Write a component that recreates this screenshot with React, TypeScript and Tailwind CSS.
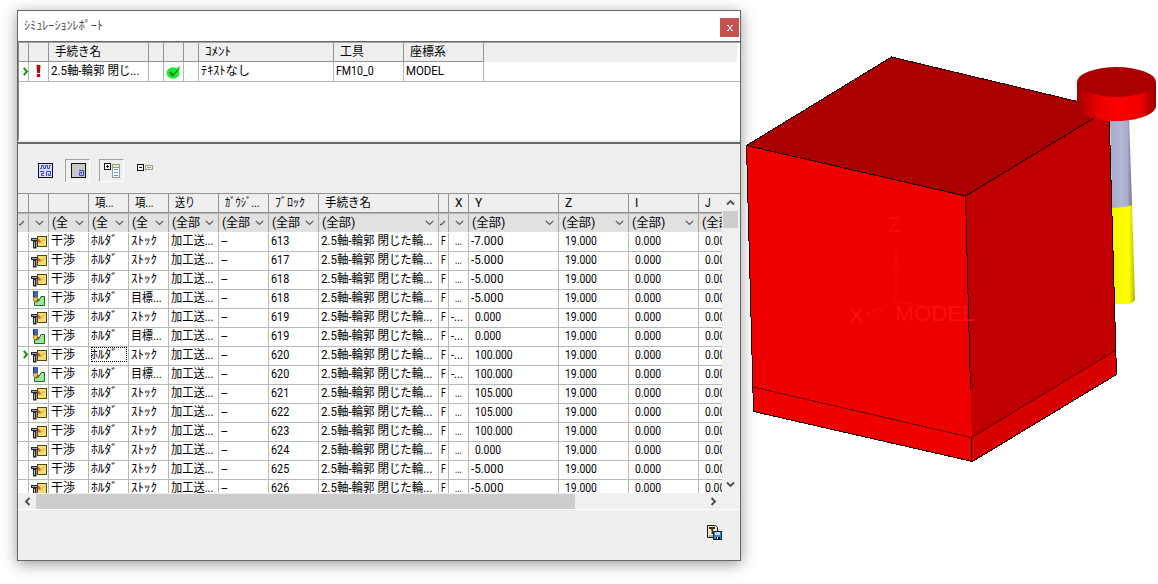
import { useLayoutEffect, useRef } from "react";
import type { ReactNode } from "react";

/** One line of text, condensed horizontally to the given width. */
function Fit({ w, children, className = "" }: { w: number; children: string; className?: string }) {
  const ref = useRef<HTMLSpanElement>(null);
  useLayoutEffect(() => {
    const el = ref.current;
    if (el && el.offsetWidth) el.style.transform = `scaleX(${w / el.offsetWidth})`;
  }, [w, children]);
  return (
    <span ref={ref} className={`inline-block shrink-0 origin-left whitespace-pre ${className}`}>
      {children}
    </span>
  );
}

function Cell({ size, className = "", children }: { size: string; className?: string; children?: ReactNode }) {
  return (
    <div className={`flex h-full shrink-0 items-center overflow-hidden border-r ${size} ${className}`}>{children}</div>
  );
}

function Chevron() {
  return (
    <svg className="shrink-0" width="9" height="6" viewBox="0 0 9 6">
      <path d="M.8 .8 4.5 4.5 8.2 .8" fill="none" stroke="#555" strokeWidth="1.2" />
    </svg>
  );
}

function Marker() {
  return (
    <svg className="ml-[5px] shrink-0" width="6" height="9" viewBox="0 0 6 9">
      <path d="M.8 .8 4 4.5 .8 8.2" fill="none" stroke="#0a960a" strokeWidth="2" />
    </svg>
  );
}

function StockIcon() {
  return (
    <svg className="ml-[2px] shrink-0" width="16" height="14" viewBox="0 0 16 14">
      <path d="M0 3h7v3H5.500v7.500H2V6H0z" fill="#26262c" />
      <path d="M1 4h5v1H1z" fill="#a2a4d4" />
      <path d="M3 7h1v5H3z" fill="#b8b8c4" />
      <rect x="6.500" y="1.500" width="9" height="10" fill="#f0de70" stroke="#52440a" />
      <path d="M9 8.500 13.500 4" fill="none" stroke="#dd9a3a" />
      <path d="M7 4h1l2 2-1 1.500H7z" fill="#d8642c" />
    </svg>
  );
}

function TargetIcon() {
  return (
    <svg className="ml-[4px] shrink-0" width="13" height="16" viewBox="0 0 13 16">
      <path d="M1.500 10.500v4h10v-9H8l-2 4-2 1.500z" fill="#9be79b" stroke="#1c6a24" />
      <rect x="0" y="0" width="5" height="6" fill="#3c64b4" />
      <path d="M0 0h1v6H0z" fill="#1c2c50" />
      <path d="M.5 6.300h4v2L2.500 11 .5 9z" fill="#f4cf3b" stroke="#6b5300" strokeWidth=".7" />
      <path d="M4 8h2v2H4z" fill="#c63b17" />
    </svg>
  );
}

const COLS = [
  { size: "w-[11px]", head: "", hw: 0, filter: "", fw: 0 },
  { size: "w-[20px]", head: "", hw: 0, filter: "", fw: 0 },
  { size: "w-[40px]", head: "", hw: 0, filter: "(全", fw: 16 },
  { size: "w-[40px]", head: "項...", hw: 19, filter: "(全", fw: 16 },
  { size: "w-[40px]", head: "項...", hw: 19, filter: "(全", fw: 16 },
  { size: "w-[50px]", head: "送り", hw: 20, filter: "(全部", fw: 28 },
  { size: "w-[50px]", head: "ｶﾞｳｼﾞ...", hw: 35, filter: "(全部", fw: 28 },
  { size: "w-[50px]", head: "ﾌﾞﾛｯｸ", hw: 30, filter: "(全部", fw: 28 },
  { size: "w-[120px]", head: "手続き名", hw: 46, filter: "(全部)", fw: 33 },
  { size: "w-[10px]", head: "", hw: 0, filter: "", fw: 0 },
  { size: "w-[20px]", head: "X", hw: 8, filter: "", fw: 0 },
  { size: "w-[90px]", head: "Y", hw: 7, filter: "(全部)", fw: 33 },
  { size: "w-[70px]", head: "Z", hw: 7, filter: "(全部)", fw: 33 },
  { size: "w-[70px]", head: "I", hw: 3, filter: "(全部)", fw: 33 },
  { size: "w-[70px]", head: "J", hw: 6, filter: "(全部)", fw: 33 },
];

type Row = { block: string; target?: boolean; x: string; y: string; active?: boolean };

const ROWS: Row[] = [
  { block: "613", x: "...", y: "-7.000" },
  { block: "617", x: "...", y: "-5.000" },
  { block: "618", x: "...", y: "-5.000" },
  { block: "618", target: true, x: "...", y: "-5.000" },
  { block: "619", x: "-...", y: "0.000" },
  { block: "619", target: true, x: "-...", y: "0.000" },
  { block: "620", x: "-...", y: "100.000", active: true },
  { block: "620", target: true, x: "-...", y: "100.000" },
  { block: "621", x: "...", y: "105.000" },
  { block: "622", x: "...", y: "105.000" },
  { block: "623", x: "...", y: "100.000" },
  { block: "624", x: "...", y: "0.000" },
  { block: "625", x: "...", y: "-5.000" },
  { block: "626", x: "...", y: "-5.000" },
];

function DataRow({ row }: { row: Row }) {
  const line = "border-[#b4bab4] pb-[3px]";
  const neg = row.y.startsWith("-");
  return (
    <div className="flex h-[19px] shrink-0 border-b border-[#b4bab4] bg-white">
      <Cell size="w-[11px]" className={line}>{row.active && <Marker />}</Cell>
      <Cell size="w-[20px]" className="border-[#b4bab4] pb-px">{row.target ? <TargetIcon /> : <StockIcon />}</Cell>
      <Cell size="w-[40px]" className={`pl-[2px] ${line}`}><Fit w={24}>干渉</Fit></Cell>
      <Cell size="w-[40px]" className={`pl-[2px] ${line}`}>
        <div className={`flex h-[15px] w-[36px] items-center border border-dotted ${row.active ? "border-black" : "border-transparent"}`}>
          <Fit w={27} className="-ml-px">ﾎﾙﾀﾞ</Fit>
        </div>
      </Cell>
      <Cell size="w-[40px]" className={`pl-[2px] ${line}`}>
        {row.target ? <Fit w={31}>目標...</Fit> : <Fit w={26}>ｽﾄｯｸ</Fit>}
      </Cell>
      <Cell size="w-[50px]" className={`pl-[2px] ${line}`}><Fit w={43}>加工送...</Fit></Cell>
      <Cell size="w-[50px]" className={`pl-[2px] ${line}`}><Fit w={6}>-</Fit></Cell>
      <Cell size="w-[50px]" className={`pl-[2px] ${line}`}><Fit w={18}>{row.block}</Fit></Cell>
      <Cell size="w-[120px]" className={`pl-[2px] ${line}`}><Fit w={111}>2.5軸-輪郭 閉じた輪...</Fit></Cell>
      <Cell size="w-[10px]" className={`pl-[2px] ${line}`}><Fit w={5}>F</Fit></Cell>
      <Cell size="w-[20px]" className={`${line} ${row.x === "..." ? "pl-[6px]" : "pl-[2px]"}`}>
        <Fit w={row.x === "..." ? 7 : 12}>{row.x}</Fit>
      </Cell>
      <Cell size="w-[90px]" className={`${line} ${neg ? "pl-[2px]" : "pl-[6px]"}`}>
        <Fit w={neg ? 32 : row.y.length > 5 ? 38 : 26}>{row.y}</Fit>
      </Cell>
      <Cell size="w-[70px]" className={`pl-[6px] ${line}`}><Fit w={32}>19.000</Fit></Cell>
      <Cell size="w-[70px]" className={`pl-[6px] ${line}`}><Fit w={26}>0.000</Fit></Cell>
      <Cell size="w-[70px]" className={`pl-[6px] ${line}`}><Fit w={26}>0.000</Fit></Cell>
    </div>
  );
}

function TopTable() {
  const h = "border-[#929292] pl-[6px]";
  const c = "border-[#b4b4b4] pb-px";
  return (
    <div className="flex h-[97px] flex-col border-l border-[#8a8a8a] bg-white">
      <div className="mr-[3px] flex h-[19px] border-b border-[#929292] bg-[#efefef] [border-image:linear-gradient(to_right,#929292_465px,#efefef_465px)_1]">
        <Cell size="w-[10px]" className={h} />
        <Cell size="w-[20px]" className={h} />
        <Cell size="w-[100px]" className={h}><Fit w={46}>手続き名</Fit></Cell>
        <Cell size="w-[15px]" className={h} />
        <Cell size="w-[20px]" className={h} />
        <Cell size="w-[15px]" className={h} />
        <Cell size="w-[135px]" className={h}><Fit w={26}>ｺﾒﾝﾄ</Fit></Cell>
        <Cell size="w-[70px]" className={h}><Fit w={24}>工具</Fit></Cell>
        <Cell size="w-[80px]" className={h}><Fit w={36}>座標系</Fit></Cell>
      </div>
      <div className="flex h-[20px] border-b border-[#b4b4b4]">
        <Cell size="w-[10px]" className={c}><span className="-ml-px flex"><Marker /></span></Cell>
        <Cell size="w-[20px]" className={`justify-center ${c}`}>
          <svg width="5" height="12" viewBox="0 0 5 12"><path d="M.5 0h4L4 8H1zM.8 9h3.400v3H.8z" fill="#b80c0c" /></svg>
        </Cell>
        <Cell size="w-[100px]" className={`pl-[2px] ${c}`}><Fit w={88}>2.5軸-輪郭 閉じ...</Fit></Cell>
        <Cell size="w-[15px]" className={c} />
        <Cell size="w-[20px]" className={`justify-center ${c}`}>
          <svg className="mt-[2px]" width="15" height="13" viewBox="0 0 15 13">
            <ellipse cx="7" cy="7" rx="6.500" ry="5.800" fill="#1ee632" />
            <path d="M4 6 6.500 9 13 2" fill="none" stroke="#0b8a18" strokeWidth="2.200" />
            <path d="M6.500 7.500 13.800 .6" fill="none" stroke="#20ee35" strokeWidth="1.400" />
          </svg>
        </Cell>
        <Cell size="w-[15px]" className={c} />
        <Cell size="w-[135px]" className={`pl-[2px] ${c}`}><Fit w={49}>ﾃｷｽﾄなし</Fit></Cell>
        <Cell size="w-[70px]" className={`pl-[2px] ${c}`}><Fit w={38}>FM10_0</Fit></Cell>
        <Cell size="w-[80px]" className={`pl-[2px] ${c}`}><Fit w={38}>MODEL</Fit></Cell>
      </div>
    </div>
  );
}

function Toolbar() {
  const pressed = "flex h-[23px] w-[25px] items-center justify-center border border-t-[#a0a0a0] border-l-[#a0a0a0] border-r-white border-b-white";
  return (
    <div className="flex h-[49px] items-start pt-[15px] pl-[20px]">
      <svg className="mt-[4px]" width="15" height="15" viewBox="0 0 15 15">
        <rect x=".5" y=".5" width="14" height="14" fill="#dedeff" stroke="#111" />
        <path d="M2 5.500h1.500v-3h2v3h2v-3h2v3h2v-3H13M2 8.500h3.500v2h-2v2H6M8.500 13V8.500h4v4h-2v-2" fill="none" stroke="#3c3cf0" />
      </svg>
      <div className={`ml-[12px] ${pressed}`}>
        <svg className="ml-px" width="15" height="15" viewBox="0 0 15 15">
          <rect x=".5" y=".5" width="14" height="14" fill="#c8c8c8" stroke="#111" />
          <path d="M8 7.500h4.500v5h-4v-3h2v1.500" fill="none" stroke="#3c3cf0" />
        </svg>
      </div>
      <div className={`ml-[9px] ${pressed}`}>
        <svg className="ml-[2px]" width="17" height="15" viewBox="0 0 17 15">
          <rect x=".5" y=".5" width="6" height="6" fill="#fff" stroke="#111" />
          <path d="M2 3.500h3M3.500 2v3" stroke="#111" />
          <rect x="8.500" y="1.500" width="7" height="13" fill="#fff" stroke="#8a9c9c" />
          <path d="M8.500 1.500h7v3h-7z" fill="#e5e5cc" stroke="#9c9c72" />
          <path d="M10 6.500h4M10 9.500h4M10 12.500h4" stroke="#5a9ac8" />
        </svg>
      </div>
      <svg className="ml-[13px] mt-[5px]" width="17" height="8" viewBox="0 0 17 8">
        <rect x=".5" y=".5" width="6" height="6" fill="#fff" stroke="#111" />
        <path d="M2 3.500h3" stroke="#111" />
        <rect x="8.500" y="1.500" width="7" height="4" fill="#f0f0df" stroke="#999b88" />
        <path d="M10 3.500h4" stroke="#999b88" />
      </svg>
    </div>
  );
}

function Arrow({ d }: { d: string }) {
  return (
    <svg width="9" height="9" viewBox="0 0 9 9">
      <path d={d} fill="none" stroke="#505050" strokeWidth="1.900" />
    </svg>
  );
}

function ResultTable() {
  return (
    <div className="flex h-[300px] border-t border-[#929292]">
      <div className="flex w-[704px] flex-col overflow-hidden">
        <div className="flex h-[19px] shrink-0 border-b border-[#929292] bg-[#efefef]">
          {COLS.map((c, i) => (
            <Cell key={i} size={c.size} className="border-[#929292] pl-[6px]">
              {c.head && <Fit w={c.hw}>{c.head}</Fit>}
            </Cell>
          ))}
        </div>
        <div className="flex h-[19px] shrink-0 border-t border-[#b0b0b0] bg-[#e1e1e1]">
          {COLS.map((c, i) => (
            <Cell key={i} size={c.size} className="justify-between border-[#a4a4a4] pl-[3px] pr-[4px]">
              {c.filter ? <Fit w={c.fw}>{c.filter}</Fit> : null}
              {c.size === "w-[10px]" || c.size === "w-[11px]" ? (
                <svg className="-ml-[2px] shrink-0" width="6" height="7" viewBox="0 0 6 7"><path d="m0 4 1 1L5 1" fill="none" stroke="#555" strokeWidth="1.200" /></svg>
              ) : (
                <span className={c.filter ? "-ml-4 flex" : "ml-[3px] flex"}><Chevron /></span>
              )}
            </Cell>
          ))}
        </div>
        <div className="flex shrink-0 flex-col bg-white pt-px">
          {ROWS.map((r, i) => <DataRow key={i} row={r} />)}
        </div>
      </div>
      <div className="ml-px flex w-[15px] flex-col items-center justify-between bg-[#f0f0f0] pt-[4px] pb-[4px]">
        <Arrow d="M1 6.500 4.500 3 8 6.500" />
        <div className="mt-[4px] mb-auto h-[17px] w-full bg-[#cdcdcd]" />
        <Arrow d="M1 2.500 4.500 6 8 2.500" />
      </div>
    </div>
  );
}

function ReportWindow() {
  return (
    <div className="mt-[10px] ml-[17px] flex h-[551px] w-[724px] shrink-0 flex-col border border-[#666] bg-[#efefef] shadow-[0_3px_14px_rgba(0,0,0,0.4)]">
      <div className="flex h-[31px] shrink-0 items-start justify-between border-b border-[#666] bg-white">
        <div className="mt-[6px] ml-[6px] flex h-[18px] items-center text-[#444]">
          <Fit w={79}>ｼﾐｭﾚｰｼｮﾝﾚﾎﾟｰﾄ</Fit>
        </div>
        <div className="mt-[7px] mr-px flex h-[19px] w-[19px] items-center justify-center bg-[#c75050]">
          <svg width="6" height="6" viewBox="0 0 6 6"><path d="m1 .5 4 5M5 .5l-4 5M0 .5h2M4 .5h2M0 5.500h2M4 5.500h2" stroke="#fff" /></svg>
        </div>
      </div>
      <div className="h-px shrink-0 bg-[#a4a4a4]" />
      <TopTable />
      <div className="h-[2px] shrink-0 bg-[#efefef]" />
      <div className="h-[2px] shrink-0 bg-[#696969]" />
      <Toolbar />
      <ResultTable />
      <div className="flex h-[16px] shrink-0 items-center bg-[#f0f0f0]">
        <div className="flex w-[18px] justify-center"><Arrow d="M6.500 1 3 4.500 6.500 8" /></div>
        <div className="h-[15px] w-[539px] bg-[#cdcdcd]" />
        <div className="ml-auto mr-[22px] flex"><Arrow d="M2.500 1 6 4.500 2.500 8" /></div>
      </div>
      <div className="h-px shrink-0 bg-white" />
      <div className="flex flex-1 items-start justify-end pt-[15px] pr-[18px]">
        <svg width="15" height="15" viewBox="0 0 15 15">
          <path d="M.5 .5h8l2 2v10H.5z" fill="#f2ecc8" stroke="#111" />
          <path d="M2 2h6v2H6v5H4V4H2z" fill="#3d2a14" />
          <path d="M4 5h1v4H4z" fill="#e38b2c" />
          <path d="M2 10h4v2H2z" fill="#8bc58b" />
          <rect x="6.500" y="6.500" width="8" height="8" fill="#3f86d2" stroke="#10203a" />
          <path d="M8 7h5v3H8z" fill="#bcdcff" />
          <path d="M9 12h4v2H9z" fill="#111" />
          <path d="M10 12h1v2h-1z" fill="#fff" />
        </svg>
      </div>
    </div>
  );
}

function Model() {
  return (
    <svg className="h-[584px] w-[417px] shrink-0" viewBox="741 0 417 584">
      <defs>
        <linearGradient id="disc">
          <stop offset="0" stopColor="#a00000" />
          <stop offset=".25" stopColor="#e80000" />
          <stop offset=".5" stopColor="#ff0000" />
          <stop offset=".8" stopColor="#f00000" />
          <stop offset="1" stopColor="#980000" />
        </linearGradient>
        <linearGradient id="shank">
          <stop offset="0" stopColor="#a4a8c6" />
          <stop offset=".5" stopColor="#b4b8d8" />
          <stop offset=".8" stopColor="#a8acca" />
          <stop offset="1" stopColor="#6e7084" />
        </linearGradient>
        <linearGradient id="flute">
          <stop offset="0" stopColor="#f4f400" />
          <stop offset=".75" stopColor="#ffff00" />
          <stop offset="1" stopColor="#b4b400" />
        </linearGradient>
      </defs>
      <path d="M1110 115h19l3 91q-9 3-20 2z" fill="url(#shank)" />
      <path d="M1111 208q12 0 21-3l3 95q-3 4-7 4h-15z" fill="url(#flute)" />
      <g shapeRendering="crispEdges">
        <path d="M746.500 145.500 965.500 196 972.500 461.500 753.500 411.500z" fill="#ee0000" />
        <path d="M965.500 196 1109 109 1116.500 374.500 972.500 461.500z" fill="#c00000" />
        <path d="M971.500 437.500 1115.500 350.500 1116.500 374.500 972.500 461.500z" fill="#d80000" />
        <path d="M746.500 145.500 891.500 57 1109 109 965.500 196z" fill="#aa0000" />
        <path d="M746.500 145.500 891.500 57 1109 109 1116.500 374.500 972.500 461.500 753.500 411.500zL965.500 196 1109 109M965.500 196 970.500 390M971.500 437.500v24" fill="none" stroke="#180000" />
        <path d="M753 387 971.500 437.500 1115.500 350.500" fill="none" stroke="#680000" />
      </g>
      <g fill="none" stroke="#f91010" strokeWidth="1">
        <path d="M896 302V249M891 270h10M893 258h6M896 302l-30 12M867 314l10-6 7 2-9 6zM896 302l69 10M955 301l8 8 4-9" opacity=".65" />
      </g>
      <g fill="#fc1414" fontFamily="Liberation Sans, Arial, sans-serif" fontSize="22">
        <text x="888" y="232" opacity=".6">Z</text>
        <text x="849" y="323" textLength="14" opacity=".8">X</text>
        <text x="895" y="321" textLength="80" lengthAdjust="spacingAndGlyphs" opacity=".8">MODEL</text>
      </g>
      <path d="M1077 82v24c0 8 18 15 39.500 15s39.500-7 39.500-15V82z" fill="url(#disc)" />
      <ellipse cx="1116.500" cy="82" rx="39.500" ry="15" fill="#aa0000" />
    </svg>
  );
}

export default function App() {
  return (
    <main className="flex h-[584px] w-[1158px] overflow-hidden bg-white font-['Roboto','Noto_Sans_CJK_JP',sans-serif] text-[12px] leading-[14px] text-black">
      <ReportWindow />
      <Model />
    </main>
  );
}
